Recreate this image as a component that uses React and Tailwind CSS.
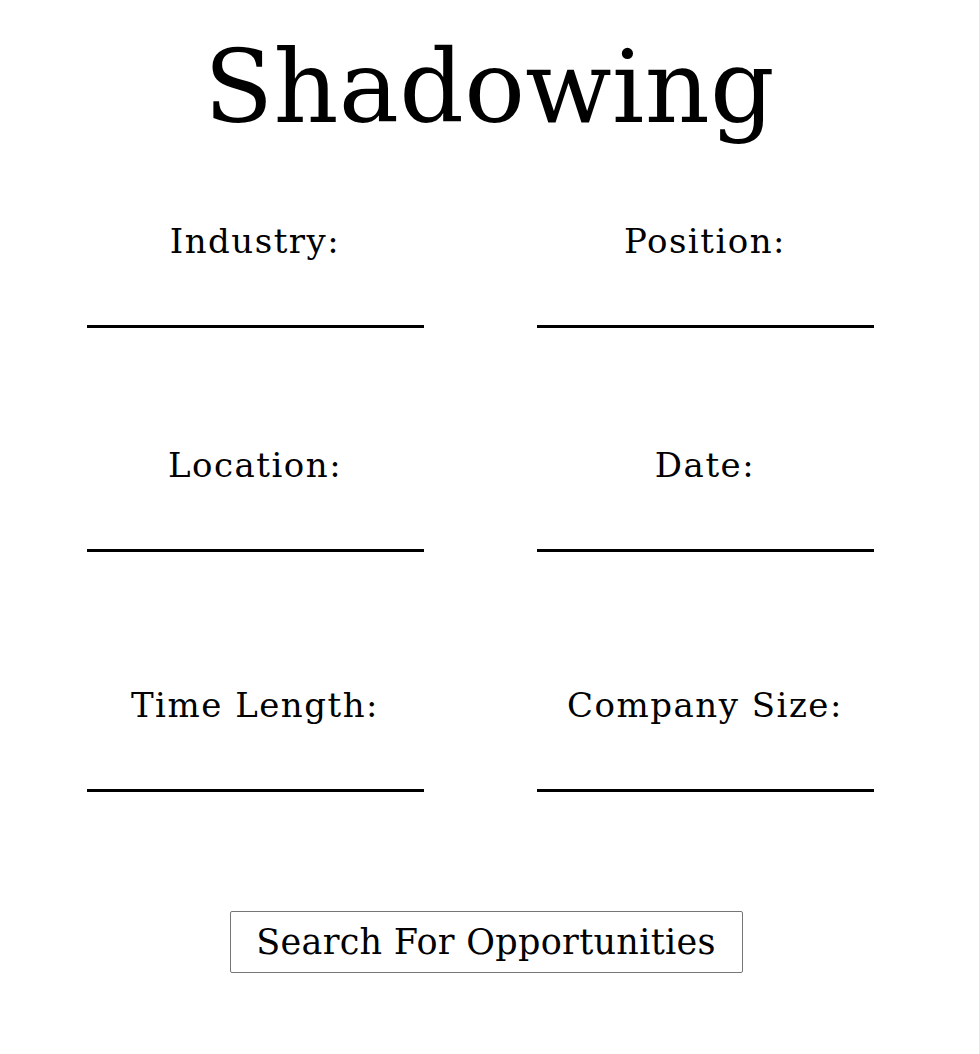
const fields = [
  ['Industry:', 'Position:'],
  ['Location:', 'Date:'],
  ['Time Length:', 'Company Size:'],
];

function Field({ label }) {
  return (
    <div className="flex flex-col items-center">
      <label className="text-[34px] leading-none tracking-[1.5px] text-black">{label}</label>
      <div className="mt-[67px] h-[3px] w-[337px] bg-black" />
    </div>
  );
}

export default function App() {
  return (
    <div
      className="min-h-screen bg-white border-r border-[#e8e8e8] text-black"
      style={{ fontFamily: '"DejaVu Serif", "Liberation Serif", serif' }}
    >
      <h1 className="pt-[37px] text-center text-[101px] leading-none font-normal tracking-[0.3px] pl-[-2px]">
        Shadowing
      </h1>

      <div className="ml-[30px] w-[900px]">
        <div className="mt-[86px] grid grid-cols-2">
          <Field label={fields[0][0]} />
          <Field label={fields[0][1]} />
        </div>
        <div className="mt-[120px] grid grid-cols-2">
          <Field label={fields[1][0]} />
          <Field label={fields[1][1]} />
        </div>
        <div className="mt-[136px] grid grid-cols-2">
          <Field label={fields[2][0]} />
          <Field label={fields[2][1]} />
        </div>
      </div>

      <div className="mt-[119px] flex justify-center">
        <button className="ml-[-7px] h-[62px] w-[513px] rounded-[2px] border border-[#767676] text-[35px] leading-none tracking-[0.3px] text-black">
          Search For Opportunities
        </button>
      </div>
    </div>
  );
}
